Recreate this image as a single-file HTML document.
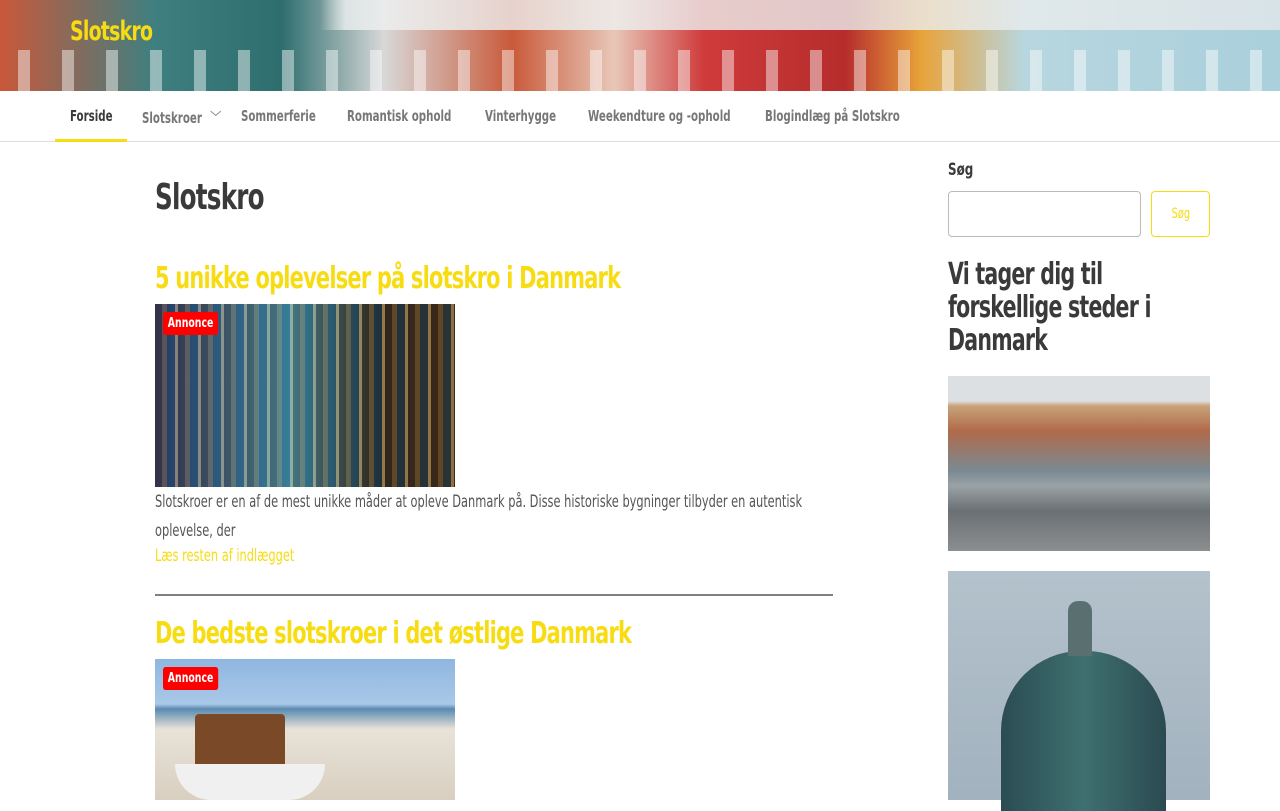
<!DOCTYPE html>
<html><head><meta charset="utf-8"><style>
*{margin:0;padding:0;box-sizing:border-box}
body{width:1280px;height:800px;overflow:hidden;background:#fff;font-family:"DejaVu Sans Condensed","Liberation Sans",sans-serif;color:#3a3a3a}
.hero{position:absolute;left:0;top:0;width:1280px;height:91px;background:linear-gradient(90deg,#c9583a 0%,#3f7f80 12%,#2e6e6e 22%,#d8d8d8 30%,#c95a3a 40%,#e8c7b8 48%,#cf3b3b 55%,#b62c2c 66%,#e8a33a 72%,#b8d6df 80%,#a9d0dc 100%);overflow:hidden}
.hero .sky{position:absolute;left:0;top:0;width:100%;height:30px;background:linear-gradient(90deg,transparent 25%,#eef0f0 27%,#eef0f0 60%,#e4e8ea 100%);opacity:.8}
.hero .win{position:absolute;left:0;top:50px;width:100%;height:41px;background:repeating-linear-gradient(90deg,transparent 0 18px,rgba(255,255,255,.45) 18px 30px,transparent 30px 44px)}
.logo{position:absolute;left:70px;top:16px;font-size:27px;font-weight:bold;color:#f7dc12;letter-spacing:-1px;transform:scaleX(.78);transform-origin:0 0}
.nav{position:absolute;top:91px;left:0;width:1280px;height:51px;border-bottom:1px solid #ddd;background:#fff}
.nav a{position:absolute;top:16px;font-size:15px;font-weight:bold;color:#777;text-decoration:none;white-space:nowrap;transform:scaleX(.76);transform-origin:0 0}
.nav .act{color:#3a3a3a}
.ul{position:absolute;left:55px;top:139px;width:72px;height:3px;background:#f7dc12}
h1{position:absolute;left:155px;top:177px;font-size:36px;font-weight:bold;letter-spacing:-1px;color:#3a3a3a;transform:scaleX(.76);transform-origin:0 0}
.t{position:absolute;left:155px;font-size:30px;font-weight:bold;color:#f7dc12;letter-spacing:-1px;white-space:nowrap;transform:scaleX(.775);transform-origin:0 0}
.img{position:absolute;left:155px;width:300px}
.badge{position:absolute;left:8px;top:8px;background:#f00;color:#fff;font-size:13px;font-weight:bold;padding:4px 6px;border-radius:3px;transform:scaleX(.8);transform-origin:0 0}
.p{position:absolute;left:155px;top:488px;width:880px;font-size:17px;line-height:29px;color:#555;transform:scaleX(.745);transform-origin:0 0}
.more{position:absolute;left:155px;top:546px;font-size:17px;color:#f7dc12;transform:scaleX(.745);transform-origin:0 0;white-space:nowrap}
.hr{position:absolute;left:155px;top:594px;width:678px;height:2px;background:#808080}
.sl{position:absolute;left:948px;top:160px;font-size:17px;font-weight:bold;transform:scaleX(.78);transform-origin:0 0}
.in{position:absolute;left:948px;top:191px;width:193px;height:46px;border:1px solid #bbb;border-radius:4px}
.btn{position:absolute;left:1151px;top:191px;width:59px;height:46px;border:1px solid #f7dc12;border-radius:4px;color:#f7dc12;font-size:14px;text-align:center;line-height:44px}
.btn span{display:inline-block;transform:scaleX(.78)}
.sh{position:absolute;left:948px;top:258px;width:345px;font-size:30px;font-weight:bold;line-height:33px;letter-spacing:-1px;transform:scaleX(.76);transform-origin:0 0}
</style></head><body>
<div class="hero"><div class="sky"></div><div class="win"></div><div class="logo">Slotskro</div></div>
<div class="nav">
<a class="act" style="left:70px">Forside</a>
<a style="left:142px">Slotskroer <span style="font-weight:normal;color:#888;margin-left:6px">﹀</span></a>
<a style="left:241px">Sommerferie</a>
<a style="left:347px">Romantisk ophold</a>
<a style="left:485px">Vinterhygge</a>
<a style="left:588px">Weekendture og -ophold</a>
<a style="left:765px">Blogindlæg på Slotskro</a>
</div>
<div class="ul"></div>
<h1>Slotskro</h1>
<div class="t" style="top:261px">5 unikke oplevelser på slotskro i Danmark</div>
<div class="img" style="top:304px;height:183px;background:repeating-linear-gradient(90deg,#3a2a1a 0 7px,#7a5a30 7px 12px,#1f3a4a 12px 20px,#c8a060 20px 23px),linear-gradient(90deg,#203060,#4aa0d0 40%,#2a3a40 70%,#3a2a18)"><div style="position:absolute;inset:0;background:linear-gradient(90deg,rgba(40,60,140,.4),rgba(80,190,230,.5) 45%,rgba(30,30,30,.3) 75%,rgba(60,40,20,.4));"></div><span class="badge">Annonce</span></div>
<div class="p">Slotskroer er en af de mest unikke måder at opleve Danmark på. Disse historiske bygninger tilbyder en autentisk oplevelse, der</div>
<div class="more">Læs resten af indlægget</div>
<div class="hr"></div>
<div class="t" style="top:616px">De bedste slotskroer i det østlige Danmark</div>
<div class="img" style="top:659px;height:141px;background:linear-gradient(180deg,#8fb6e0 0,#a9c8e8 45px,#5a8ab0 50px,#e8e2d8 70px,#d9cfc0 100%)"><div style="position:absolute;left:40px;top:55px;width:90px;height:60px;background:#7a4a28;border-radius:4px"></div><div style="position:absolute;left:20px;top:105px;width:150px;height:36px;background:#f0f0f0;border-radius:0 0 60px 60px"></div><span class="badge">Annonce</span></div>
<div class="sl">Søg</div>
<div class="in"></div>
<div class="btn"><span>Søg</span></div>
<div class="sh">Vi tager dig til forskellige steder i Danmark</div>
<div style="position:absolute;left:948px;top:376px;width:262px;height:175px;background:linear-gradient(180deg,#dde0e2 0,#dde0e2 25px,#c9a27a 30px,#b06a4a 55px,#7a8a92 95px,#9aa2a6 110px,#6a7074 135px,#8c8e90 175px)"></div>
<div style="position:absolute;left:948px;top:571px;width:262px;height:229px;background:linear-gradient(180deg,#b4c2cc,#a2b2be)"><div style="position:absolute;left:53px;top:80px;width:165px;height:160px;border-radius:80px 80px 0 0;background:linear-gradient(90deg,#2a4c52,#3f7070 50%,#2a4a50)"></div><div style="position:absolute;left:120px;top:30px;width:24px;height:55px;background:#5a7070;border-radius:10px 10px 0 0"></div></div>
</body></html>
